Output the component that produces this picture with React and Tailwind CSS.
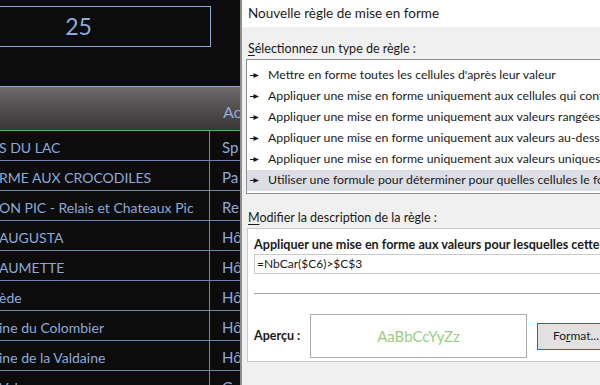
import React from 'react';

const rows = [
  ['S DU LAC', 'Sp'],
  ['RME AUX CROCODILES', 'Pa'],
  ['ON PIC - Relais et Chateaux Pic', 'Re'],
  ['AUGUSTA', 'Hô'],
  ['AUMETTE', 'Hô'],
  ['ède', 'Hô'],
  ['ine du Colombier', 'Hô'],
  ['ine de la Valdaine', 'Hô'],
  ['Val', 'Ga'],
];

const rules = [
  "Mettre en forme toutes les cellules d'après leur valeur",
  'Appliquer une mise en forme uniquement aux cellules qui contiennent',
  'Appliquer une mise en forme uniquement aux valeurs rangées parmi les premières ou les dernières valeurs',
  'Appliquer une mise en forme uniquement aux valeurs au-dessus ou en dessous de la moyenne',
  'Appliquer une mise en forme uniquement aux valeurs uniques ou aux doublons',
  'Utiliser une formule pour déterminer pour quelles cellules le format sera appliqué',
];

const Pointer = () => (
  <svg width="9" height="7" viewBox="0 0 9 7" className="shrink-0">
    <path d="M0 2.9 H4 V4.1 H0 Z M3.5 1 L9 3.5 L3.5 6 Z" fill="#1a1a1a" />
  </svg>
);

const Sheet = () => (
  <div className="w-[240px] h-[385px] shrink-0 overflow-hidden bg-[#0c0c0c] flex flex-col font-['Lato',sans-serif] text-[#8eaadb]">
    {/* cellule du seuil */}
    <div className="h-[86px] shrink-0 pt-[6px]">
      <div className="ml-[-54px] w-[265px] h-[41px] border border-[#8eaadb] flex items-center justify-center text-[23px]">
        25
      </div>
    </div>

    {/* en-tête du tableau */}
    <div className="h-[45px] shrink-0 border-t border-[#8eaadb] border-b border-b-[#5fae5a] bg-gradient-to-b from-[#6c6a6a] via-[#504e4e] to-[#393737] flex items-end pb-[6px]">
      <div className="w-[223px] shrink-0" />
      <span className="text-[16px] whitespace-nowrap">Ac</span>
    </div>

    {rows.map((r, i) => (
      <div key={i} className="h-[30px] shrink-0 flex border-b border-[#6f86b3] text-[14px] whitespace-nowrap">
        <div className="w-[210px] shrink-0 border-r border-[#6f86b3] flex items-center pt-[3px] overflow-hidden">
          <span className="-ml-[1px]">{r[0]}</span>
        </div>
        <div className="flex items-center pt-[3px] pl-[12px] text-[15px]">{r[1]}</div>
      </div>
    ))}
  </div>
);

const Dialog = () => (
  <div className="flex-1 h-[385px] overflow-hidden bg-[#f0f0f0] border-l-2 border-[#8c8c8c] font-['Lato',sans-serif] text-[#1a1a1a] whitespace-nowrap">
    <div className="h-[27px] bg-white pl-[6px] flex items-center text-[13.5px]">
      Nouvelle règle de mise en forme
    </div>

    <div className="pl-[6px] pt-[13px] h-[32px] text-[12.5px] leading-[18px]">
      <span className="underline underline-offset-2">S</span>électionnez un type de règle :
    </div>

    <div className="ml-[4px] h-[135px] bg-white border border-[#8a8f98] border-r-0 pt-[5px] text-[12.3px]">
      {rules.map((t, i) => (
        <div
          key={i}
          className={`h-[21px] flex items-center gap-[9px] pl-[3px] ${i === rules.length - 1 ? 'bg-[#dcdde5]' : ''}`}
        >
          <Pointer />
          <span>{t}</span>
        </div>
      ))}
    </div>

    <div className="pl-[6px] pt-[15px] h-[34px] text-[12.5px] leading-[18px]">
      <span className="underline underline-offset-2">M</span>odifier la description de la règle :
    </div>

    <div className="ml-[5px] h-[134px] bg-white border border-[#c9c9c9] border-r-0 pl-[6px] pt-[6px] flex flex-col">
      <div className="font-bold h-[19px] leading-[19px] text-[12.6px]">
        Appliquer une mise en forme aux valeurs pour lesquelles cette formule est vraie :
      </div>
      <div className="h-[20px] border border-[#c9c9c9] border-r-0 flex items-center pl-[2px] text-[12px]">
        =NbCar($C6)&gt;$C$3
      </div>
      <div className="mt-[19px] h-[2px] border-t border-[#a0a0a0] border-b border-b-white" />
      <div className="flex items-center pt-[19px]">
        <span className="font-bold w-[56px] shrink-0 text-[12.5px]">Aperçu :</span>
        <div className="w-[217px] h-[44px] shrink-0 border border-[#adadad] flex items-center justify-center text-[#9acd84] text-[15px]">
          AaBbCcYyZz
        </div>
        <button className="ml-[10px] w-[80px] h-[27px] shrink-0 bg-[#e1e1e1] border border-[#0078d7] text-[12px] text-left pl-[15px]">
          Fo<span className="underline">r</span>mat...
        </button>
      </div>
    </div>
  </div>
);

export default function App() {
  return (
    <div className="w-[600px] h-[385px] flex overflow-hidden">
      <Sheet />
      <Dialog />
    </div>
  );
}
